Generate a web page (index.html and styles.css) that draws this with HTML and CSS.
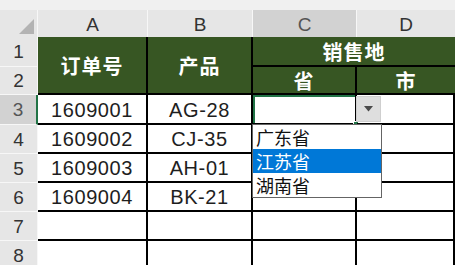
FILE: index.html
```html
<!DOCTYPE html>
<html lang="zh">
<head>
<meta charset="utf-8">
<link rel="stylesheet" href="styles.css">
</head>
<body>
<div class="app">
  <div class="topstrip"></div>
  <div class="sheet">
    <div class="corner"><span class="tri"></span></div>
    <div class="colh">A</div>
    <div class="colh">B</div>
    <div class="colh sel">C</div>
    <div class="colh last">D</div>

    <div class="rowh r1">1</div>
    <div class="rowh r2">2</div>
    <div class="hd a12">订单号</div>
    <div class="hd b12">产品</div>
    <div class="hd c1">销售地</div>
    <div class="hd c2">省</div>
    <div class="hd d2">市</div>

    <div class="rowh sel">3</div>
    <div class="cell">1609001</div>
    <div class="cell">AG-28</div>
    <div class="cell active"><span class="handle"></span></div>
    <div class="cell"></div>

    <div class="rowh">4</div>
    <div class="cell">1609002</div>
    <div class="cell">CJ-35</div>
    <div class="cell"></div>
    <div class="cell"></div>

    <div class="rowh">5</div>
    <div class="cell">1609003</div>
    <div class="cell">AH-01</div>
    <div class="cell"></div>
    <div class="cell"></div>

    <div class="rowh">6</div>
    <div class="cell">1609004</div>
    <div class="cell">BK-21</div>
    <div class="cell"></div>
    <div class="cell"></div>

    <div class="rowh">7</div>
    <div class="cell"></div>
    <div class="cell"></div>
    <div class="cell"></div>
    <div class="cell"></div>

    <div class="rowh">8</div>
    <div class="cell"></div>
    <div class="cell"></div>
    <div class="cell"></div>
    <div class="cell"></div>
  </div>

  <div class="ddbtn"><svg width="9" height="6" viewBox="0 0 9 6"><path d="M0 0H9L4.5 5.5Z" fill="#4a4a4a"/></svg></div>
  <ul class="ddlist">
    <li>广东省</li>
    <li class="hl">江苏省</li>
    <li>湖南省</li>
  </ul>
</div>
</body>
</html>
```

FILE: styles.css
```css
* { box-sizing: border-box; }
html, body { margin: 0; padding: 0; }
body {
  width: 455px;
  height: 265px;
  overflow: hidden;
  background: #ffffff;
  font-family: "Liberation Sans", "Noto Sans CJK SC", sans-serif;
}
.app { position: relative; width: 455px; height: 265px; overflow: hidden; }
.topstrip { height: 10px; background: #f0f0f0; }
.sheet {
  display: grid;
  grid-template-columns: 38px 110px 105px 104px 98px;
  grid-template-rows: 27px 30px 28px 30px 29px 29px 29px 29px 29px;
}
.corner {
  background: #e6e6e6;
  border-right: 1px solid #f7f7f7;
  position: relative;
}
.tri {
  position: absolute;
  right: 3px;
  bottom: 3px;
  width: 0; height: 0;
  border-left: 15px solid transparent;
  border-bottom: 15px solid #b3b3b3;
}
.colh {
  background: #e6e6e6;
  color: #333;
  font-size: 19px;
  display: flex;
  align-items: center;
  justify-content: center;
  padding-top: 2px;
  border-right: 1px solid #f7f7f7;
}
.colh.sel { background: #d2d2d2; color: #555; }
.colh.last { border-right: 0; }
.rowh {
  background: #e6e6e6;
  color: #333;
  font-size: 19px;
  display: flex;
  align-items: center;
  justify-content: center;
  border-bottom: 1px solid #f7f7f7;
  border-right: 1px solid #f7f7f7;
  padding-top: 1px;
}
.rowh.sel { background: #d2d2d2; color: #555; border-right: 2px solid #217346; }
.r1 { grid-row: 2; grid-column: 1; }
.r2 { grid-row: 3; grid-column: 1; }
.hd {
  background: #375623;
  color: #ffffff;
  font-family: "Noto Sans CJK SC", sans-serif;
  font-weight: 700;
  font-size: 20px;
  letter-spacing: 1px;
  display: flex;
  align-items: center;
  justify-content: center;
  border-right: 2px solid #000;
  border-bottom: 2px solid #000;
}
.a12 { grid-column: 2; grid-row: 2 / span 2; }
.b12 { grid-column: 3; grid-row: 2 / span 2; }
.c1 { grid-column: 4 / span 2; grid-row: 2; border-right: 0; }
.c2 { grid-column: 4; grid-row: 3; }
.d2 { grid-column: 5; grid-row: 3; border-right: 0; }
.cell {
  position: relative;
  color: #1e1e1e;
  font-size: 20px;
  letter-spacing: 0.6px;
  display: flex;
  align-items: center;
  justify-content: center;
  padding-top: 2px;
  border-right: 2px solid #000;
  border-bottom: 2px solid #000;
}
.cell.active {
  box-shadow: inset 2px 0 0 #217346, inset 0 2px 0 #217346;
}
.handle {
  position: absolute;
  right: -4px;
  bottom: -4px;
  width: 6px;
  height: 6px;
  background: #217346;
  border: 1px solid #fff;
}
.ddbtn {
  position: absolute;
  left: 356px;
  top: 96px;
  width: 25px;
  height: 26px;
  background: #dedede;
  border: 1px solid #cfcfcf;
  display: flex;
  align-items: center;
  justify-content: center;
}
.ddlist {
  position: absolute;
  left: 252px;
  top: 124px;
  width: 130px;
  height: 74px;
  margin: 0;
  padding: 0;
  list-style: none;
  background: #fff;
  border: 1px solid #646464;
  font-family: "Noto Sans CJK SC", sans-serif;
  font-size: 18px;
  color: #111;
}
.ddlist li {
  height: 24px;
  line-height: 24px;
  padding-left: 3px;
}
.ddlist li.hl { background: #0078d7; color: #fff; }
```
